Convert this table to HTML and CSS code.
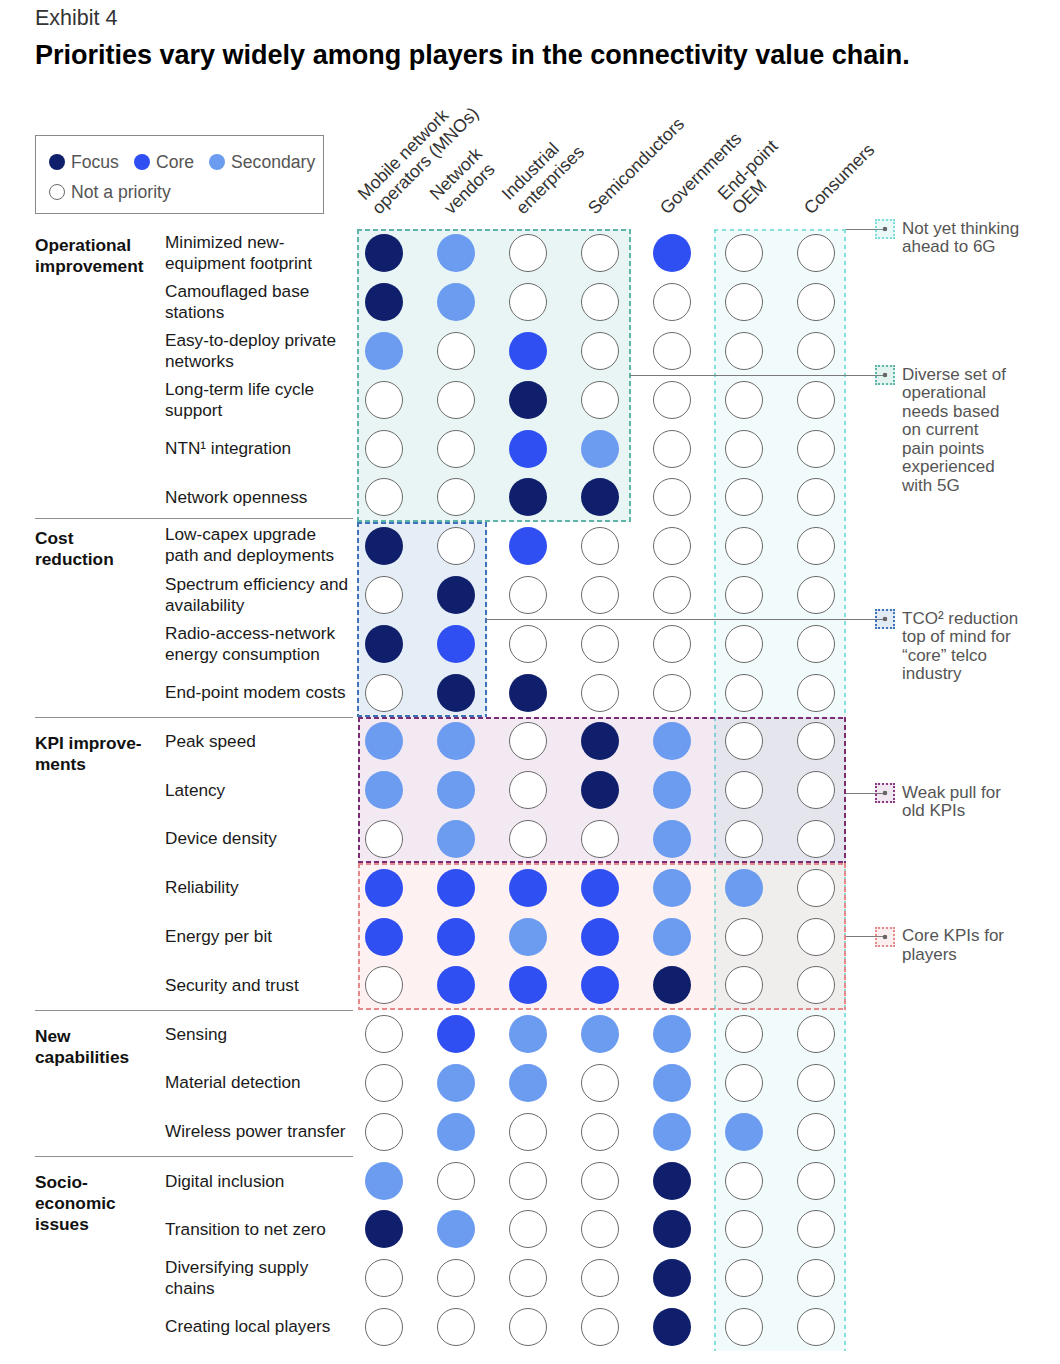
FILE: index.html
```html
<!DOCTYPE html>
<html lang="en">
<head>
<meta charset="utf-8">
<title>Exhibit 4</title>
<link rel="stylesheet" href="styles.css">
</head>
<body>
<div class="page">
  <div class="exhibit">Exhibit 4</div>
  <h1 class="title">Priorities vary widely among players in the connectivity value chain.</h1>

  <div class="chart">
    <!-- highlight boxes -->
    <div class="box box--six"></div>
    <div class="box box--ops"></div>
    <div class="box box--tco"></div>
    <div class="box box--kpi"></div>
    <div class="box box--core"></div>

    <!-- callouts -->
    <div class="note note--six"><span class="lead"></span><span class="marker"></span><p class="note-text">Not yet thinking<br>ahead to 6G</p></div>
    <div class="note note--ops"><span class="lead"></span><span class="marker"></span><p class="note-text">Diverse set of<br>operational<br>needs based<br>on current<br>pain points<br>experienced<br>with 5G</p></div>
    <div class="note note--tco"><span class="lead"></span><span class="marker"></span><p class="note-text">TCO² reduction<br>top of mind for<br>“core” telco<br>industry</p></div>
    <div class="note note--kpi"><span class="lead"></span><span class="marker"></span><p class="note-text">Weak pull for<br>old KPIs</p></div>
    <div class="note note--core"><span class="lead"></span><span class="marker"></span><p class="note-text">Core KPIs for<br>players</p></div>

    <!-- header row -->
    <div class="legend">
      <div class="legend-row">
        <span class="key"><i class="kdot f"></i>Focus</span>
        <span class="key"><i class="kdot c"></i>Core</span>
        <span class="key"><i class="kdot s"></i>Secondary</span>
      </div>
      <div class="legend-row">
        <span class="key"><i class="kdot n"></i>Not a priority</span>
      </div>
    </div>
    <div class="colhead"><span>Mobile network<br>operators (MNOs)</span></div>
    <div class="colhead"><span>Network<br>vendors</span></div>
    <div class="colhead"><span>Industrial<br>enterprises</span></div>
    <div class="colhead"><span>Semiconductors</span></div>
    <div class="colhead"><span>Governments</span></div>
    <div class="colhead"><span>End-point<br>OEM</span></div>
    <div class="colhead"><span>Consumers</span></div>

    <!-- Operational improvement -->
    <div class="cat span-6 cat--top">Operational<br>improvement</div>
    <div class="item">Minimized new-<br>equipment footprint</div>
    <i class="dot f"></i><i class="dot s"></i><i class="dot n"></i><i class="dot n"></i><i class="dot c"></i><i class="dot n"></i><i class="dot n"></i>
    <div class="item">Camouflaged base<br>stations</div>
    <i class="dot f"></i><i class="dot s"></i><i class="dot n"></i><i class="dot n"></i><i class="dot n"></i><i class="dot n"></i><i class="dot n"></i>
    <div class="item">Easy-to-deploy private<br>networks</div>
    <i class="dot s"></i><i class="dot n"></i><i class="dot c"></i><i class="dot n"></i><i class="dot n"></i><i class="dot n"></i><i class="dot n"></i>
    <div class="item">Long-term life cycle<br>support</div>
    <i class="dot n"></i><i class="dot n"></i><i class="dot f"></i><i class="dot n"></i><i class="dot n"></i><i class="dot n"></i><i class="dot n"></i>
    <div class="item">NTN¹ integration</div>
    <i class="dot n"></i><i class="dot n"></i><i class="dot c"></i><i class="dot s"></i><i class="dot n"></i><i class="dot n"></i><i class="dot n"></i>
    <div class="item">Network openness</div>
    <i class="dot n"></i><i class="dot n"></i><i class="dot f"></i><i class="dot f"></i><i class="dot n"></i><i class="dot n"></i><i class="dot n"></i>

    <!-- Cost reduction -->
    <div class="cat span-4 cat--top sec sec--lift">Cost<br>reduction</div>
    <div class="item sec sec--lift">Low-capex upgrade<br>path and deployments</div>
    <i class="dot f"></i><i class="dot n"></i><i class="dot c"></i><i class="dot n"></i><i class="dot n"></i><i class="dot n"></i><i class="dot n"></i>
    <div class="item">Spectrum efficiency and<br>availability</div>
    <i class="dot n"></i><i class="dot f"></i><i class="dot n"></i><i class="dot n"></i><i class="dot n"></i><i class="dot n"></i><i class="dot n"></i>
    <div class="item">Radio-access-network<br>energy consumption</div>
    <i class="dot f"></i><i class="dot c"></i><i class="dot n"></i><i class="dot n"></i><i class="dot n"></i><i class="dot n"></i><i class="dot n"></i>
    <div class="item">End-point modem costs</div>
    <i class="dot n"></i><i class="dot f"></i><i class="dot f"></i><i class="dot n"></i><i class="dot n"></i><i class="dot n"></i><i class="dot n"></i>

    <!-- KPI improvements -->
    <div class="cat span-6 sec">KPI improve-<br>ments</div>
    <div class="item sec">Peak speed</div>
    <i class="dot s"></i><i class="dot s"></i><i class="dot n"></i><i class="dot f"></i><i class="dot s"></i><i class="dot n"></i><i class="dot n"></i>
    <div class="item">Latency</div>
    <i class="dot s"></i><i class="dot s"></i><i class="dot n"></i><i class="dot f"></i><i class="dot s"></i><i class="dot n"></i><i class="dot n"></i>
    <div class="item">Device density</div>
    <i class="dot n"></i><i class="dot s"></i><i class="dot n"></i><i class="dot n"></i><i class="dot s"></i><i class="dot n"></i><i class="dot n"></i>
    <div class="item">Reliability</div>
    <i class="dot c"></i><i class="dot c"></i><i class="dot c"></i><i class="dot c"></i><i class="dot s"></i><i class="dot s"></i><i class="dot n"></i>
    <div class="item">Energy per bit</div>
    <i class="dot c"></i><i class="dot c"></i><i class="dot s"></i><i class="dot c"></i><i class="dot s"></i><i class="dot n"></i><i class="dot n"></i>
    <div class="item">Security and trust</div>
    <i class="dot n"></i><i class="dot c"></i><i class="dot c"></i><i class="dot c"></i><i class="dot f"></i><i class="dot n"></i><i class="dot n"></i>

    <!-- New capabilities -->
    <div class="cat span-3 sec">New<br>capabilities</div>
    <div class="item sec">Sensing</div>
    <i class="dot n"></i><i class="dot c"></i><i class="dot s"></i><i class="dot s"></i><i class="dot s"></i><i class="dot n"></i><i class="dot n"></i>
    <div class="item">Material detection</div>
    <i class="dot n"></i><i class="dot s"></i><i class="dot s"></i><i class="dot n"></i><i class="dot s"></i><i class="dot n"></i><i class="dot n"></i>
    <div class="item">Wireless power transfer</div>
    <i class="dot n"></i><i class="dot s"></i><i class="dot n"></i><i class="dot n"></i><i class="dot s"></i><i class="dot s"></i><i class="dot n"></i>

    <!-- Socio-economic issues -->
    <div class="cat span-4 sec">Socio-<br>economic<br>issues</div>
    <div class="item sec">Digital inclusion</div>
    <i class="dot s"></i><i class="dot n"></i><i class="dot n"></i><i class="dot n"></i><i class="dot f"></i><i class="dot n"></i><i class="dot n"></i>
    <div class="item">Transition to net zero</div>
    <i class="dot f"></i><i class="dot s"></i><i class="dot n"></i><i class="dot n"></i><i class="dot f"></i><i class="dot n"></i><i class="dot n"></i>
    <div class="item">Diversifying supply<br>chains</div>
    <i class="dot n"></i><i class="dot n"></i><i class="dot n"></i><i class="dot n"></i><i class="dot f"></i><i class="dot n"></i><i class="dot n"></i>
    <div class="item">Creating local players</div>
    <i class="dot n"></i><i class="dot n"></i><i class="dot n"></i><i class="dot n"></i><i class="dot f"></i><i class="dot n"></i><i class="dot n"></i>
  </div>
</div>
</body>
</html>
```

FILE: styles.css
```css
* { box-sizing: border-box; }

body {
  margin: 0;
  background: #fff;
  color: #111;
  font-family: "Liberation Sans", Arial, sans-serif;
}

.page {
  padding: 6px 0 0 35px;
}

.exhibit {
  font-size: 21.5px;
  line-height: 24px;
  color: #333;
}

.title {
  margin: 9px 0 0;
  font-size: 27px;
  line-height: 32px;
  font-weight: 700;
  color: #000;
}

/* ---------- chart grid ---------- */
.chart {
  position: relative;
  display: grid;
  grid-template-columns: 130px 188px repeat(7, 72px) 1fr;
  grid-template-rows: 158px repeat(23, 48.8px);
}

/* legend */
.legend {
  grid-column: 1 / 3;
  align-self: end;
  justify-self: start;
  width: 289px;
  height: 79px;
  margin-bottom: 15px;
  padding: 15px 0 0 13px;
  border: 1px solid #8a8a8a;
  font-size: 17.6px;
  color: #555;
}
.legend-row {
  display: flex;
  gap: 15px;
  height: 22px;
  margin-bottom: 8px;
  line-height: 22px;
}
.key {
  display: flex;
  align-items: center;
  gap: 6px;
  white-space: nowrap;
}
.kdot {
  width: 16px;
  height: 16px;
  border-radius: 50%;
  flex: none;
}

/* column headers */
.colhead {
  display: flex;
  align-items: flex-end;
  padding: 0 0 11px 29px;
  overflow: visible;
}
.colhead span {
  display: block;
  white-space: nowrap;
  font-size: 17.8px;
  line-height: 20px;
  color: #333;
  transform: rotate(-45deg);
  transform-origin: 0 100%;
}

/* row labels */
.cat {
  grid-column: 1;
  padding-top: 15px;
  font-size: 17.3px;
  line-height: 21px;
  font-weight: 700;
  color: #111;
}
.cat--top { padding-top: 6px; }
.span-6 { grid-row: span 6; }
.span-4 { grid-row: span 4; }
.span-3 { grid-row: span 3; }

.item {
  grid-column: 2;
  display: flex;
  align-items: center;
  font-size: 17.2px;
  line-height: 21px;
  color: #1a1a1a;
  white-space: nowrap;
}

.sec { border-top: 1px solid #8f8f8f; }
.sec--lift { margin-top: -4px; }
.cat.sec--lift { padding-top: 9px; }

/* circles */
.dot {
  position: relative;
  z-index: 1;
  align-self: center;
  width: 38px;
  height: 38px;
  margin-left: 12px;
  border-radius: 50%;
}
.f { background: #0f1f6b; }
.c { background: #2f4ff2; }
.s { background: #6c9cf0; }
.n { background: #fff; border: 1px solid #6a6a6a; }

/* highlight boxes */
.box {
  position: absolute;
  top: 0;
  bottom: 0;
  z-index: 0;
  --d: 5px;
  --g: 8px;
  background:
    repeating-linear-gradient(90deg, var(--c) 0 var(--d), transparent var(--d) var(--g)) left top / 100% 2px no-repeat,
    repeating-linear-gradient(90deg, var(--c) 0 var(--d), transparent var(--d) var(--g)) left bottom / 100% 2px no-repeat,
    repeating-linear-gradient(180deg, var(--c) 0 var(--d), transparent var(--d) var(--g)) left top / 2px 100% no-repeat,
    repeating-linear-gradient(180deg, var(--c) 0 var(--d), transparent var(--d) var(--g)) right top / 2px 100% no-repeat,
    var(--bg);
}
.box--six {
  grid-row: 2 / 25;
  grid-column: 8 / 10;
  left: 1px;
  right: 11px;
  bottom: -2px;
  --c: #86e0dc;
  --bg: rgba(80, 210, 210, 0.08);
  --d: 4px;
  --g: 8px;
}
.box--ops {
  grid-row: 2 / 8;
  grid-column: 3 / 7;
  left: 4px;
  right: 10px;
  --c: #5cb5a6;
  --bg: rgba(40, 160, 160, 0.1);
}
.box--tco {
  grid-row: 8 / 12;
  grid-column: 3 / 5;
  left: 4px;
  right: 10px;
  --c: #3f72b8;
  --bg: rgba(0, 80, 170, 0.1);
}
.box--kpi {
  grid-row: 12 / 15;
  grid-column: 3 / 10;
  left: 5px;
  right: 11px;
  --c: #7c2c74;
  --bg: rgba(125, 35, 125, 0.1);
}
.box--core {
  grid-row: 15 / 18;
  grid-column: 3 / 10;
  left: 5px;
  right: 11px;
  --c: #e58a8a;
  --bg: rgba(235, 115, 115, 0.1);
}

/* callouts */
.note {
  position: absolute;
  left: 61px;
  right: 0;
  top: 50%;
  z-index: 2;
  display: flex;
  align-items: flex-start;
  margin-top: -10px;
}
.note--six { grid-row: 2 / 3; grid-column: 9 / -1; top: 0; --c: #7fdcd8; --f: rgba(127, 220, 216, 0.18); }
.note--ops { grid-row: 2 / 8; grid-column: 6 / -1; --c: #5cb5a6; --f: rgba(92, 181, 166, 0.18); }
.note--tco { grid-row: 8 / 12; grid-column: 4 / -1; --c: #3f72b8; --f: rgba(63, 114, 184, 0.15); }
.note--kpi { grid-row: 12 / 15; grid-column: 9 / -1; margin-top: -7px; --c: #8a3a82; --f: rgba(138, 58, 130, 0.12); }
.note--core { grid-row: 15 / 18; grid-column: 9 / -1; --c: #e58a8a; --f: rgba(229, 138, 138, 0.15); }

.lead {
  flex: 1;
  height: 1px;
  margin-top: 9.5px;
  margin-right: -10px;
  background: #7a7a7a;
}
.marker {
  flex: none;
  width: 20px;
  height: 20px;
  border: 2px dotted var(--c);
  background: radial-gradient(circle, #666 0 2px, transparent 2.6px), var(--f);
}
.note-text {
  flex: none;
  width: 158px;
  margin: 0.5px 0 0 7px;
  font-size: 17px;
  line-height: 18.5px;
  color: #555;
  white-space: nowrap;
}
```
